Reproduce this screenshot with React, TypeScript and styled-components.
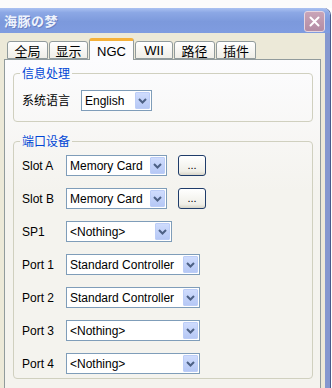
import React from 'react';
import styled, { createGlobalStyle } from 'styled-components';

const GlobalStyle = createGlobalStyle`
  html, body {
    margin: 0;
    padding: 0;
    background: #ffffff;
  }
  body {
    font-family: 'Liberation Sans', 'Noto Sans CJK SC', sans-serif;
    font-size: 12px;
    color: #000;
  }
`;

const tabs = [
  { label: '全局', w: 41 },
  { label: '显示', w: 39 },
  { label: 'NGC', w: 45, active: true },
  { label: 'WII', w: 38 },
  { label: '路径', w: 41 },
  { label: '插件', w: 40 },
];

const ports = [
  { label: 'Slot A', value: 'Memory Card', w: 101, more: true },
  { label: 'Slot B', value: 'Memory Card', w: 101, more: true },
  { label: 'SP1', value: '<Nothing>', w: 106 },
  { label: 'Port 1', value: 'Standard Controller', w: 134 },
  { label: 'Port 2', value: 'Standard Controller', w: 134 },
  { label: 'Port 3', value: '<Nothing>', w: 134 },
  { label: 'Port 4', value: '<Nothing>', w: 134 },
];

const Chevron = () => (
  <svg width='9' height='6' viewBox='0 0 9 6'>
    <polyline points='1,1 4.5,4.5 8,1' fill='none' stroke='#4d6185' strokeWidth='2' />
  </svg>
);

const Combo = ({ value, w }: { value: string; w: number }) => (
  <ComboBox $w={w}>
    <span className='value'>{value}</span>
    <DropButton>
      <Chevron />
    </DropButton>
  </ComboBox>
);

const App = () => {
  return (
    <>
      <GlobalStyle />
      <Screen>
        <Desktop />
        <Window>
          <TitleBar>
            <span className='title'>海豚の梦</span>
            <CloseButton>
              <svg width='11' height='11' viewBox='0 0 11 11'>
                <path d='M1.5 1.5 L9.5 9.5 M9.5 1.5 L1.5 9.5' stroke='#fff' strokeWidth='2' strokeLinecap='round' />
              </svg>
            </CloseButton>
          </TitleBar>
          <Body>
            <TabStrip>
              {tabs.map((t) => (
                <Tab key={t.label} $w={t.w} $active={!!t.active}>
                  {t.label}
                </Tab>
              ))}
            </TabStrip>
            <Panel>
              <GroupBox>
                <Legend>信息处理</Legend>
                <Row>
                  <Label>系统语言</Label>
                  <Combo value='English' w={71} />
                </Row>
              </GroupBox>
              <GroupBox $second>
                <Legend>端口设备</Legend>
                <PortGrid>
                  {ports.map((p) => (
                    <React.Fragment key={p.label}>
                      <Label>{p.label}</Label>
                      <Row>
                        <Combo value={p.value} w={p.w} />
                        {p.more && <MoreButton>...</MoreButton>}
                      </Row>
                    </React.Fragment>
                  ))}
                </PortGrid>
              </GroupBox>
            </Panel>
          </Body>
        </Window>
      </Screen>
    </>
  );
};

export default App;

const Screen = styled.div`
  width: 332px;
  height: 388px;
  overflow: hidden;
  display: flex;
  flex-direction: column;
  background: #ffffff;
`;

const Desktop = styled.div`
  height: 8px;
  flex-shrink: 0;
  background: #fbfbfb;
`;

const Window = styled.div`
  width: 330px;
  flex: 1;
  display: flex;
  flex-direction: column;
  box-shadow: 1px 0 0 #4a5a8c;
  border-top-right-radius: 7px;
`;

const TitleBar = styled.div`
  height: 25px;
  flex-shrink: 0;
  display: flex;
  align-items: center;
  justify-content: space-between;
  padding: 0 5px 0 4px;
  border-top-right-radius: 7px;
  background: linear-gradient(#aac1f1 0%, #8ca8e5 18%, #7c99dc 55%, #7f9ce0 100%);

  .title {
    font-family: 'Noto Sans CJK SC', sans-serif;
    font-size: 13px;
    font-weight: bold;
    color: #eef3fd;
    letter-spacing: 0.5px;
    text-shadow: 1px 1px 0 #6a82c4;
  }
`;

const CloseButton = styled.div`
  width: 19px;
  height: 19px;
  margin-top: 2px;
  display: flex;
  align-items: center;
  justify-content: center;
  border: 1px solid #e6d6e0;
  border-radius: 3px;
  background: linear-gradient(#c9a4b8, #b38ca4);
`;

const Body = styled.div`
  flex: 1;
  display: flex;
  flex-direction: column;
  padding: 5px 4px 0 4px;
  background: #ece9d8;
  border-right: 5px solid #8598cf;
`;

const TabStrip = styled.div`
  display: flex;
  align-items: flex-end;
  gap: 1px;
  height: 21px;
  padding-left: 3px;
  position: relative;
  z-index: 1;
`;

const Tab = styled.div<{ $w: number; $active: boolean }>`
  width: ${(p) => p.$w}px;
  box-sizing: border-box;
  height: ${(p) => (p.$active ? 22 : 18)}px;
  margin-bottom: ${(p) => (p.$active ? -1 : 0)}px;
  display: flex;
  align-items: center;
  justify-content: center;
  padding-top: ${(p) => (p.$active ? 1 : 0)}px;
  font-size: 13px;
  border: 1px solid #919b9c;
  border-bottom: ${(p) => (p.$active ? 'none' : '1px solid #919b9c')};
  border-top: ${(p) => (p.$active ? '3px solid #f5b13a' : '1px solid #919b9c')};
  border-radius: 3px 3px 0 0;
  background: ${(p) => (p.$active ? '#fcfcfe' : 'linear-gradient(#ffffff, #efeee7)')};
`;

const Panel = styled.div`
  flex: 1;
  padding: 6px 7px 0 8px;
  border: 1px solid #919b9c;
  border-bottom: none;
  background: linear-gradient(#fcfcfe, #f4f3ee 40%);
`;

const GroupBox = styled.fieldset<{ $second?: boolean }>`
  margin: ${(p) => (p.$second ? '12px 0 0 0' : '0')};
  min-width: 0;
  border: 1px solid #d0d0bf;
  border-radius: 4px;
  padding: ${(p) => (p.$second ? '7px 8px 4px 8px' : '10px 8px 10px 8px')};
`;

const Legend = styled.legend`
  font-family: 'Noto Sans CJK SC', sans-serif;
  font-size: 12px;
  line-height: 14px;
  color: #0046d5;
  padding: 0 2px;
  margin-left: -2px;
`;

const Row = styled.div`
  display: flex;
  align-items: center;
  gap: 11px;
`;

const Label = styled.span`
  font-size: 12px;
  line-height: 14px;
  white-space: nowrap;
`;

const PortGrid = styled.div`
  display: grid;
  grid-template-columns: 44px 1fr;
  grid-auto-rows: 21px;
  row-gap: 12px;
  align-items: center;
  justify-items: start;
`;

const ComboBox = styled.div<{ $w: number }>`
  width: ${(p) => p.$w}px;
  height: 21px;
  box-sizing: border-box;
  display: flex;
  align-items: center;
  border: 1px solid #7f9db9;
  background: #ffffff;
  padding: 1px 1px 1px 3px;

  .value {
    flex: 1;
    font-size: 12px;
    white-space: nowrap;
    overflow: hidden;
  }
`;

const DropButton = styled.div`
  width: 15px;
  height: 17px;
  box-sizing: border-box;
  display: flex;
  align-items: center;
  justify-content: center;
  border: 1px solid #bccdf7;
  border-radius: 1px;
  background: linear-gradient(#cfdcfd, #b6c8f5);
`;

const MoreButton = styled.div`
  width: 28px;
  height: 21px;
  box-sizing: border-box;
  display: flex;
  align-items: flex-end;
  justify-content: center;
  padding-bottom: 4px;
  font-size: 11px;
  line-height: 11px;
  border: 1px solid #1f3c6a;
  border-radius: 3px;
  background: linear-gradient(#ffffff, #f0efe8 80%, #d8d5c8);
`;
